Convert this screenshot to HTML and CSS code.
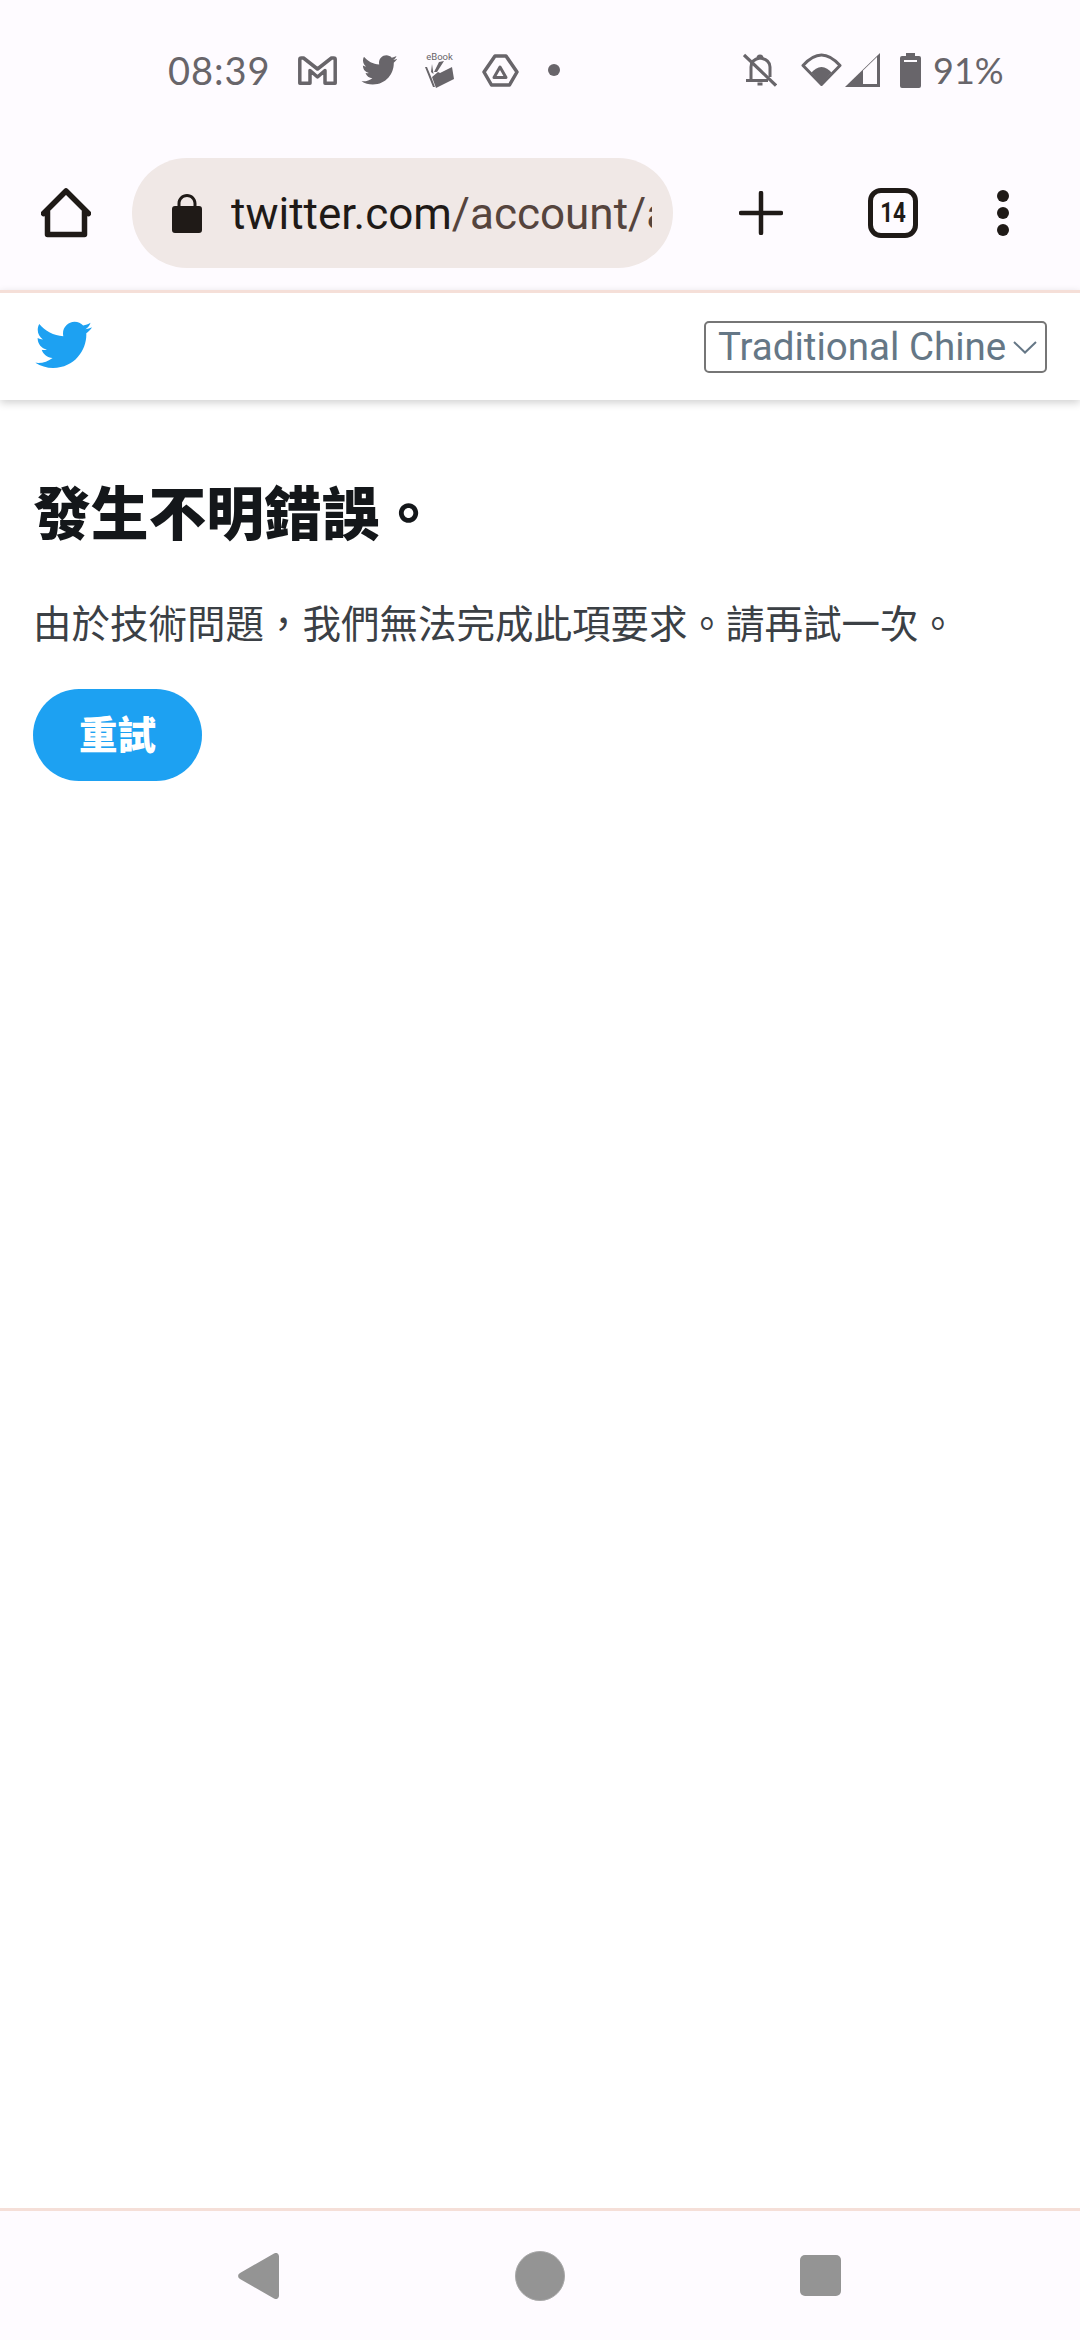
FILE: index.html
```html
<!DOCTYPE html>
<html lang="zh-Hant">
<head>
<meta charset="utf-8">
<title>Twitter</title>
<link rel="stylesheet" href="styles.css">
</head>
<body>
<div class="page">
  <div class="status">
    <div class="status-left">
      <span class="time">08:39</span>
      <svg class="ic-gmail" viewBox="0 0 39 29"><path d="M1.800 27.200V3.500a1.500 1.500 0 0 1 1.500-1.500h2.200L19.500 13 33.500 2h2.200a1.500 1.500 0 0 1 1.500 1.500V27.200H27V14.500L19.500 21 12 14.500V27.200Z" fill="none" stroke="#68656a" stroke-width="3.500" stroke-linejoin="round"/></svg>
      <svg class="ic-bird" viewBox="0 0 24 24"><path fill="#68656a" d="M23.643 4.937c-.835.37-1.732.62-2.675.727.962-.576 1.7-1.49 2.048-2.578-.9.534-1.897.922-2.958 1.13-.85-.904-2.06-1.47-3.4-1.47-2.572 0-4.658 2.086-4.658 4.66 0 .364.042.718.12 1.06-3.873-.195-7.304-2.05-9.602-4.868-.4.69-.63 1.49-.63 2.342 0 1.616.823 3.043 2.072 3.878-.764-.025-1.482-.234-2.11-.583v.06c0 2.257 1.605 4.14 3.737 4.568-.392.106-.803.162-1.227.162-.3 0-.593-.028-.877-.082.593 1.85 2.313 3.198 4.352 3.234-1.595 1.25-3.604 1.995-5.786 1.995-.376 0-.747-.022-1.112-.065 2.062 1.323 4.51 2.093 7.14 2.093 8.57 0 13.255-7.098 13.255-13.254 0-.2-.005-.402-.014-.602.91-.658 1.7-1.477 2.323-2.41z"/></svg>
      <div class="ic-ebook">
        <span class="ebook-label">eBook</span>
        <svg class="ebook-art" viewBox="0 0 31 27"><path fill="#68656a" d="M1 6 3 6 8 18 11 26 9 26ZM8 16 14 11 16 12 28 6 30 18 12 27ZM8 3 9.500 13 7 11ZM15 1 20 0 13 11 10 11Z"/></svg>
      </div>
      <svg class="ic-drive" viewBox="0 0 37 33"><path d="M13 2H24L35 18 27.500 31H9.500L2 18Z" fill="none" stroke="#68656a" stroke-width="3.500" stroke-linejoin="round"/><path d="M18 13 24 23.500H12Z" fill="none" stroke="#68656a" stroke-width="3" stroke-linejoin="round"/></svg>
      <span class="dot"></span>
    </div>
    <div class="status-right">
      <svg class="ic-bell" viewBox="0 0 34 34"><path d="M8 27.500V14C8 9 11 6 17 5c6 1 10 4 10 9v10" fill="none" stroke="#68656a" stroke-width="3"/><path d="M3 27.500H25M14.500 31h5" stroke="#68656a" stroke-width="3" fill="none"/><path d="M15 5a2 2 0 0 1 4 0" stroke="#68656a" stroke-width="3" fill="none"/><path d="M1 2 33 32.500" stroke="#68656a" stroke-width="3.200"/></svg>
      <svg class="ic-wifi" viewBox="0 0 41 34"><path d="M2 12.500C7 7 13 2 20.500 2S34 7 39 12.500L20.500 31.500Z" fill="none" stroke="#68656a" stroke-width="3" stroke-linejoin="round"/><path d="M10.500 19.500C13 16.500 16.500 14 20.500 14s7.500 2.500 10 5.500L20.500 31Z" fill="#68656a"/></svg>
      <svg class="ic-signal" viewBox="0 0 35 34"><path d="M0 34 35 0V34Z" fill="#68656a"/><path d="M18 31V17.500L32 4V31Z" fill="#fefbff"/></svg>
      <svg class="ic-battery" viewBox="0 0 21 35"><path fill="#68656a" d="M6 0h9v3h4a2 2 0 0 1 2 2v28a2 2 0 0 1-2 2H2a2 2 0 0 1-2-2V5a2 2 0 0 1 2-2h4Z"/><path fill="#fefbff" d="M4 7h13v2H4z"/></svg>
      <span class="pct">91%</span>
    </div>
  </div>

  <div class="toolbar">
    <svg class="ic-home" viewBox="0 0 50 50"><path d="M2.500 25.500 25 3 47.500 25.500M6.500 23.500V46.500H43.500V23.500" fill="none" stroke="#1f1a17" stroke-width="5.500" stroke-linejoin="round" stroke-linecap="round"/></svg>
    <div class="pill">
      <svg class="ic-lock" viewBox="0 0 30 39"><path fill="#1f1a17" d="M3 12h2.500V9.500C5.500 4.200 9.800 0 15 0s9.500 4.200 9.500 9.500V12H27a3 3 0 0 1 3 3v21a3 3 0 0 1-3 3H3a3 3 0 0 1-3-3V15a3 3 0 0 1 3-3ZM8.500 12h13V9.500c0-3.600-2.900-6.500-6.500-6.500S8.500 5.900 8.500 9.500Z"/></svg>
      <div class="url"><span class="host">twitter.com</span><span class="path">/account/a</span></div>
    </div>
    <svg class="ic-plus" viewBox="0 0 44 44"><path d="M22 2V42M2 22H42" stroke="#1f1a17" stroke-width="4.500" stroke-linecap="round"/></svg>
    <div class="tabs"><span class="tabs-num">14</span></div>
    <div class="menu"><span></span><span></span><span></span></div>
  </div>

  <header class="site-header">
    <svg class="logo" viewBox="0 0 24 24"><path fill="#1da1f2" d="M23.643 4.937c-.835.37-1.732.62-2.675.727.962-.576 1.7-1.49 2.048-2.578-.9.534-1.897.922-2.958 1.13-.85-.904-2.06-1.47-3.4-1.47-2.572 0-4.658 2.086-4.658 4.66 0 .364.042.718.12 1.06-3.873-.195-7.304-2.05-9.602-4.868-.4.69-.63 1.49-.63 2.342 0 1.616.823 3.043 2.072 3.878-.764-.025-1.482-.234-2.11-.583v.06c0 2.257 1.605 4.14 3.737 4.568-.392.106-.803.162-1.227.162-.3 0-.593-.028-.877-.082.593 1.85 2.313 3.198 4.352 3.234-1.595 1.25-3.604 1.995-5.786 1.995-.376 0-.747-.022-1.112-.065 2.062 1.323 4.51 2.093 7.14 2.093 8.57 0 13.255-7.098 13.255-13.254 0-.2-.005-.402-.014-.602.91-.658 1.7-1.477 2.323-2.41z"/></svg>
    <div class="lang">
      <span class="lang-text">Traditional Chine</span>
      <svg class="chev" viewBox="0 0 24 14"><path d="M1 2 12 12.500 23 2" fill="none" stroke="#657786" stroke-width="2"/></svg>
    </div>
  </header>

  <main class="content">
    <h1 class="title">發生不明錯誤。</h1>
    <p class="desc">由於技術問題，我們無法完成此項要求。請再試一次。</p>
    <button class="retry">重試</button>
  </main>

  <nav class="navbar">
    <svg class="nav-back" viewBox="0 0 41 46"><path fill="#949494" d="M36 .500c2.500-1.500 5 0 5 3v39c0 3-2.500 4.500-5 3L2 26c-2.500-1.500-2.500-4.500 0-6Z"/></svg>
    <span class="nav-home"></span>
    <span class="nav-recent"></span>
  </nav>
</div>
</body>
</html>
```

FILE: styles.css
```css
* { box-sizing: border-box; }
html, body { margin: 0; padding: 0; }
body { background: #fff; font-family: Roboto, "Noto Sans CJK TC", sans-serif; }
.page { width: 1080px; height: 2340px; display: flex; flex-direction: column; }

.status { height: 136px; padding: 4px 79px 0 168px; background: #fefbff; display: flex; justify-content: space-between; align-items: center; }
.status-left, .status-right { display: flex; align-items: center; }
.time { width: 100px; font: 400 38px/1 Lato, sans-serif; letter-spacing: 1px; color: #68656a; white-space: nowrap; }
.ic-gmail { width: 39px; height: 29px; margin-left: 30px; }
.ic-bird { width: 42px; height: 38px; margin-left: 21px; }
.ic-ebook { width: 31px; height: 35px; margin-left: 24px; display: flex; flex-direction: column; align-items: center; }
.ebook-label { font: 400 9.500px/8px Roboto, sans-serif; color: #68656a; white-space: nowrap; }
.ebook-art { width: 31px; height: 27px; }
.ic-drive { width: 37px; height: 33px; margin-left: 27px; }
.dot { width: 12px; height: 12px; margin-left: 29px; border-radius: 50%; background: #68656a; }
.ic-bell { width: 34px; height: 34px; }
.ic-wifi { width: 41px; height: 34px; margin-left: 24px; }
.ic-signal { width: 35px; height: 34px; margin-left: 3px; }
.ic-battery { width: 21px; height: 35px; margin-left: 20px; }
.pct { width: 68px; margin-left: 12px; font: 400 36px/1 Lato, sans-serif; color: #68656a; white-space: nowrap; }

.toolbar { height: 154px; padding: 0 0 0 41px; background: #fefbff; display: flex; align-items: center; }
.ic-home { width: 50px; height: 50px; }
.pill { width: 541px; height: 110px; margin-left: 41px; padding: 0 21px 0 40px; border-radius: 55px; background: #f0e8e6; display: flex; align-items: center; }
.ic-lock { width: 30px; height: 39px; flex: none; }
.url { margin-left: 29px; overflow: hidden; white-space: nowrap; font-size: 44px; line-height: 54px; flex: 1; padding-top: 2px; }
.host { color: #1f1a17; }
.path { color: #55443d; }
.ic-plus { width: 44px; height: 44px; margin-left: 66px; flex: none; }
.tabs { width: 50px; height: 50px; margin-left: 85px; border: 5px solid #1f1a17; border-radius: 13px; flex: none; display: flex; align-items: center; justify-content: center; color: #1f1a17; }
.tabs-num { font: 700 28px/1 Roboto, sans-serif; transform: scaleX(.8); }
.menu { width: 12px; margin-left: 79px; display: flex; flex-direction: column; gap: 5px; flex: none; }
.menu span { width: 12px; height: 12px; border-radius: 50%; background: #1f1a17; }

.site-header { height: 110px; padding: 0 33px; border-top: 3px solid #f5dfd8; background: #fff; box-shadow: 0 3px 8px rgba(0,0,0,.18); display: flex; align-items: center; justify-content: space-between; position: relative; }
.logo { width: 60px; height: 60px; margin-bottom: 3px; }
.lang { width: 343px; height: 52px; padding: 0 8px 0 12px; border: 2px solid #767676; border-radius: 5px; display: flex; align-items: center; justify-content: space-between; }
.lang-text { white-space: nowrap; font-size: 38.500px; line-height: 48px; color: #657786; }
.chev { width: 24px; height: 14px; flex: none; }

.content { flex: 1; padding: 73px 33px 0; background: #fff; font-family: "Noto Sans CJK TC", sans-serif; }
.title { margin: 0; font-size: 57.750px; line-height: 1.3; font-weight: 900; color: #14171a; }
.desc { margin: 48px 0 0; font-size: 38.500px; line-height: 1.3; color: #3b4045; }
.retry { display: block; width: 169px; height: 92px; margin: 43px 0 0; padding: 0 0 6px; border: 0; border-radius: 46px; background: #1da1f2; color: #fff; font: 900 38.500px/1 "Noto Sans CJK TC", sans-serif; }

.navbar { height: 132px; padding-left: 238px; border-top: 3px solid #f5dfd8; background: #fefbff; display: flex; align-items: center; }
.nav-back { width: 41px; height: 46px; }
.nav-home { width: 50px; height: 50px; margin-left: 236px; border-radius: 50%; background: #949494; border: 1px solid #a8a8a8; }
.nav-recent { width: 41px; height: 41px; margin-left: 235px; border-radius: 5px; background: #949494; }
```
